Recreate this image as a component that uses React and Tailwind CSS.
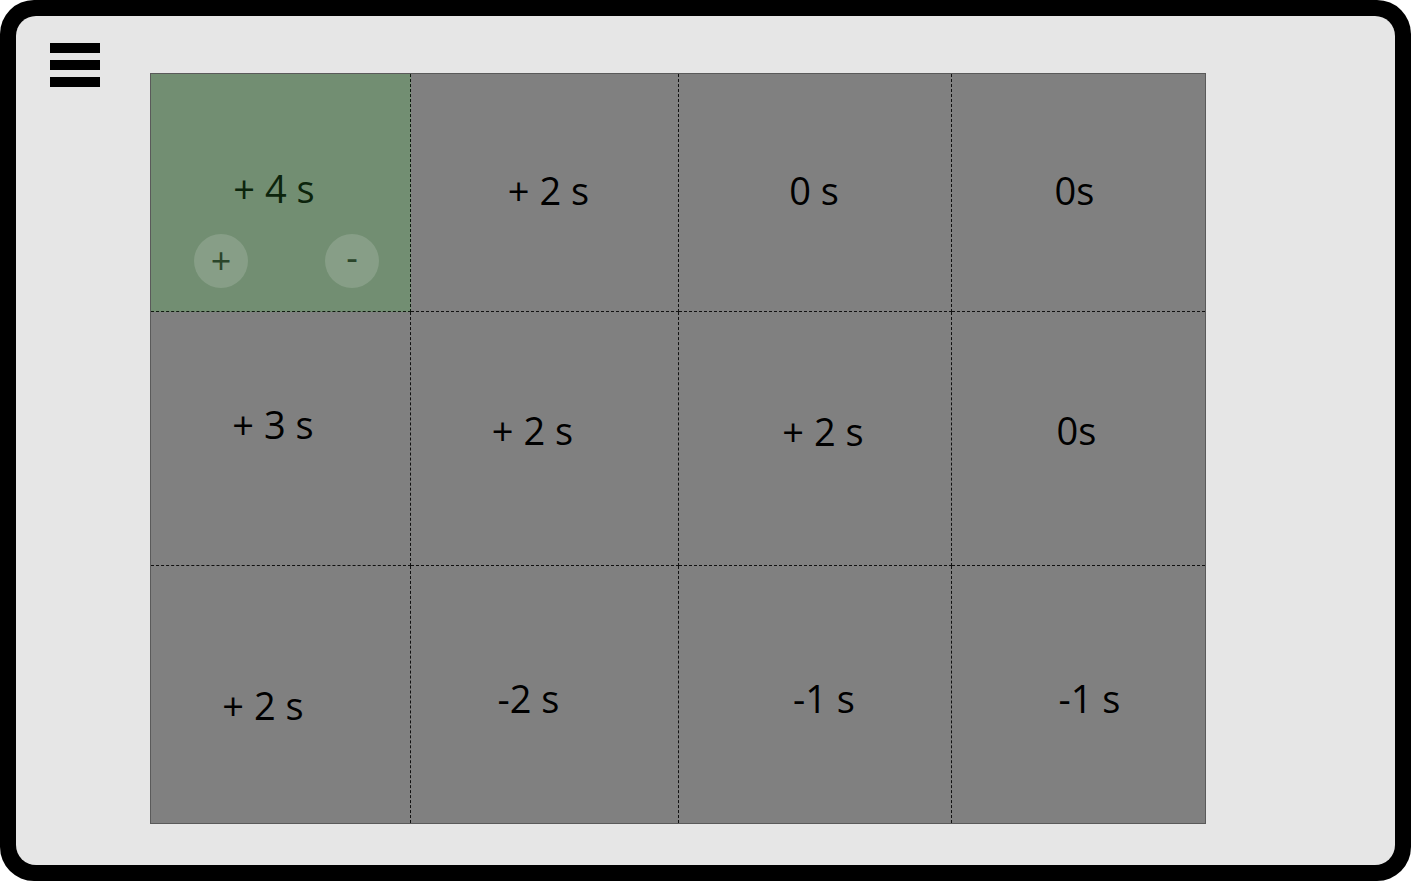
import React from 'react';

// values per cell, row by row (the first cell is the selected one)
const rows = [
  [
    { label: '+ 4 s', selected: true },
    { label: '+ 2 s', pad: 'pl-[8px] pb-[6px]' },
    { label: '0 s', pad: 'pr-[2px] pb-[6px]' },
    { label: '0s', pad: 'pr-[8px] pb-[6px]' },
  ],
  [
    { label: '+ 3 s', pad: 'pr-[15px] pb-[30px]' },
    { label: '+ 2 s', pad: 'pr-[24px] pb-[18px]' },
    { label: '+ 2 s', pad: 'pl-[16px] pb-[16px]' },
    { label: '0s', pad: 'pr-[4px] pb-[18px]' },
  ],
  [
    { label: '+ 2 s', pad: 'pr-[35px] pt-[20px]' },
    { label: '-2 s', pad: 'pr-[32px] pt-[6px]' },
    { label: '-1 s', pad: 'pl-[18px] pt-[6px]' },
    { label: '-1 s', pad: 'pl-[22px] pt-[6px]' },
  ],
];

function Hamburger() {
  return (
    <button className="flex flex-col gap-[7px] mt-[27px] ml-[34px] w-[50px]">
      <span className="block h-[10px] w-[50px] bg-black" />
      <span className="block h-[10px] w-[50px] bg-black" />
      <span className="block h-[10px] w-[50px] bg-black" />
    </button>
  );
}

function SelectedCell() {
  return (
    <div className="flex flex-col bg-[#728e72] border-r border-b border-dashed border-[#101a10]">
      <div className="pt-[95px] flex justify-center pr-[13px]">
        <span className="text-[38px] leading-none text-[#0c240c]">+ 4 s</span>
      </div>
      <div className="flex mt-[27px] ml-[43px] gap-[77px]">
        <button className="w-[54px] h-[54px] rounded-full bg-white/15 flex items-center justify-center text-[36px] leading-none text-[#2a452a] pb-[1px]">
          +
        </button>
        <button className="w-[54px] h-[54px] rounded-full bg-white/15 flex items-center justify-center text-[36px] leading-none text-[#2a452a] pb-[6px]">
          -
        </button>
      </div>
    </div>
  );
}

function Cell({ label, pad, right, bottom }) {
  return (
    <div
      className={
        'flex items-center justify-center border-dashed border-[#111] ' +
        (right ? 'border-r ' : '') +
        (bottom ? 'border-b ' : '') +
        (pad || '')
      }
    >
      <span className="text-[38px] leading-none text-black">{label}</span>
    </div>
  );
}

export default function App() {
  return (
    <div className="w-[1411px] h-[881px] bg-black rounded-[34px] p-4 font-['Open_Sans',sans-serif]">
      <div className="h-full w-full bg-[#e6e6e6] rounded-[20px] flex items-start">
        <Hamburger />
        <div className="mt-[57px] ml-[50px] grid grid-cols-[260px_268px_273px_253px] grid-rows-[238px_254px_257px] bg-[#808080] border border-[#5a5a5a]">
          {rows.map((row, r) =>
            row.map((cell, c) =>
              cell.selected ? (
                <SelectedCell key={`${r}-${c}`} />
              ) : (
                <Cell
                  key={`${r}-${c}`}
                  label={cell.label}
                  pad={cell.pad}
                  right={c < 3}
                  bottom={r < 2}
                />
              )
            )
          )}
        </div>
      </div>
    </div>
  );
}
